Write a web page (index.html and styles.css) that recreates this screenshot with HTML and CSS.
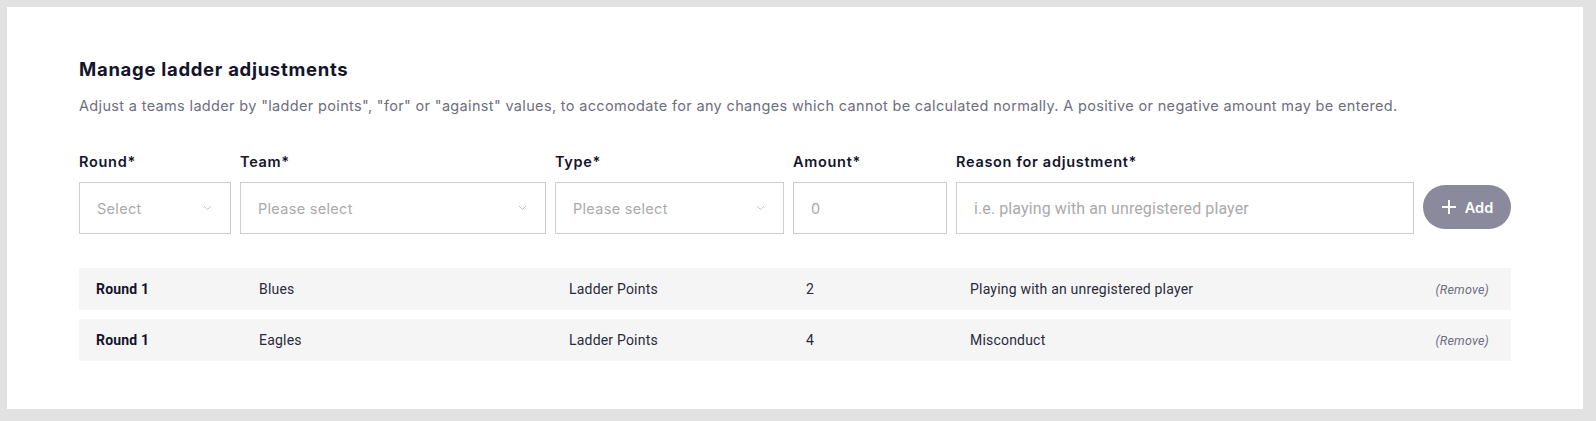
FILE: index.html
```html
<!DOCTYPE html>
<html lang="en">
  <head>
    <meta charset="UTF-8" />
    <meta name="viewport" content="width=device-width, initial-scale=1.0" />
    <title>Ladder adjustments</title>
    <link rel="stylesheet" href="styles.css">
  </head>
  <body>
    <div class="card">
      <h2 class="title">Manage ladder adjustments</h2>
      <p class="intro">Adjust a teams ladder by "ladder points", "for" or "against" values, to accomodate for any changes which cannot be calculated normally. A positive or negative amount may be entered.</p>

      <div class="form-row">
        <div class="field">
          <label>Round*</label>
          <div class="select">
            <span>Select</span>
            <svg class="chevron" width="9" height="6" viewBox="0 0 9 6"><path d="M1 1l3.5 3.5L8 1" fill="none" stroke="#c4c4c4" stroke-width="1"/></svg>
          </div>
        </div>
        <div class="field">
          <label>Team*</label>
          <div class="select">
            <span>Please select</span>
            <svg class="chevron" width="9" height="6" viewBox="0 0 9 6"><path d="M1 1l3.5 3.5L8 1" fill="none" stroke="#c4c4c4" stroke-width="1"/></svg>
          </div>
        </div>
        <div class="field">
          <label>Type*</label>
          <div class="select">
            <span>Please select</span>
            <svg class="chevron" width="9" height="6" viewBox="0 0 9 6"><path d="M1 1l3.5 3.5L8 1" fill="none" stroke="#c4c4c4" stroke-width="1"/></svg>
          </div>
        </div>
        <div class="field">
          <label>Amount*</label>
          <input class="input" type="text" placeholder="0" />
        </div>
        <div class="field">
          <label>Reason for adjustment*</label>
          <input class="input reason" type="text" placeholder="i.e. playing with an unregistered player" />
        </div>
        <div class="field">
          <button class="add-btn">
            <svg width="16" height="16" viewBox="0 0 16 16"><path d="M8 1v14M1 8h14" stroke="#fff" stroke-width="2"/></svg>
            Add
          </button>
        </div>
      </div>

      <div class="list">
        <div class="adj-row">
          <span class="round">Round 1</span>
          <span>Blues</span>
          <span>Ladder Points</span>
          <span>2</span>
          <span>Playing with an unregistered player</span>
          <a class="remove" href="#">(Remove)</a>
        </div>
        <div class="adj-row">
          <span class="round">Round 1</span>
          <span>Eagles</span>
          <span>Ladder Points</span>
          <span>4</span>
          <span>Misconduct</span>
          <a class="remove" href="#">(Remove)</a>
        </div>
      </div>
    </div>
  </body>
</html>
```

FILE: styles.css
```css
      html,
      body {
        margin: 0;
        height: 421px;
      }
      body {
        background: #e2e2e2;
        padding: 7px 13px 12px 7px;
        box-sizing: border-box;
        font-family: "Inter", "Liberation Sans", sans-serif;
      }
      .card {
        background: #ffffff;
        height: 100%;
        padding: 50px 72px 48px;
        box-sizing: border-box;
      }
      .title {
        margin: 0;
        font-size: 18.5px;
        line-height: 24px;
        font-weight: 700;
        letter-spacing: 0.7px;
        color: #14142b;
      }
      .intro {
        margin: 15px 0 0;
        font-size: 14.5px;
        line-height: 20px;
        letter-spacing: 0.34px;
        color: #6e6e7e;
      }
      .form-row {
        display: grid;
        grid-template-columns: 152px 306px 229px 154px 458px 88px;
        column-gap: 9px;
        margin-top: 36px;
      }
      .field {
        display: flex;
        flex-direction: column;
        justify-content: flex-end;
      }
      .field label {
        font-size: 14.5px;
        line-height: 20px;
        font-weight: 600;
        letter-spacing: 0.7px;
        color: #14142b;
        margin-bottom: 10px;
      }
      .select,
      .input {
        height: 52px;
        box-sizing: border-box;
        border: 1px solid #cdcdcd;
        background: #ffffff;
        font-family: "Inter", "Liberation Sans", sans-serif;
        font-size: 14.5px;
        letter-spacing: 0.3px;
        color: #aaaaaa;
      }
      .select {
        display: flex;
        align-items: center;
        justify-content: space-between;
        padding: 0 18px 0 17px;
      }
      .input {
        width: 100%;
        padding: 0 17px;
        outline: none;
      }
      .input::placeholder {
        color: #aaaaaa;
      }
      .reason {
        font-family: "Roboto", sans-serif;
        font-size: 16px;
        letter-spacing: 0.1px;
      }
      .add-btn {
        height: 44px;
        margin-bottom: 5px;
        border: none;
        border-radius: 22px;
        background: #8a8a9c;
        color: #ffffff;
        font-family: "Inter", "Liberation Sans", sans-serif;
        font-size: 14.5px;
        font-weight: 600;
        display: flex;
        align-items: center;
        justify-content: center;
        gap: 8px;
        cursor: pointer;
      }
      .list {
        margin-top: 34px;
        display: flex;
        flex-direction: column;
        gap: 9px;
      }
      .adj-row {
        display: grid;
        grid-template-columns: 163px 310px 237px 164px 1fr auto;
        align-items: center;
        height: 42px;
        padding: 0 22px 0 17px;
        background: #f5f5f5;
        font-family: "Roboto", sans-serif;
        font-size: 14px;
        letter-spacing: 0.2px;
        color: #2a2a3a;
      }
      .adj-row .round {
        font-weight: 700;
        color: #14142b;
      }
      .remove {
        font-style: italic;
        font-size: 12.5px;
        color: #6e6e7e;
        text-decoration: none;
      }
```
